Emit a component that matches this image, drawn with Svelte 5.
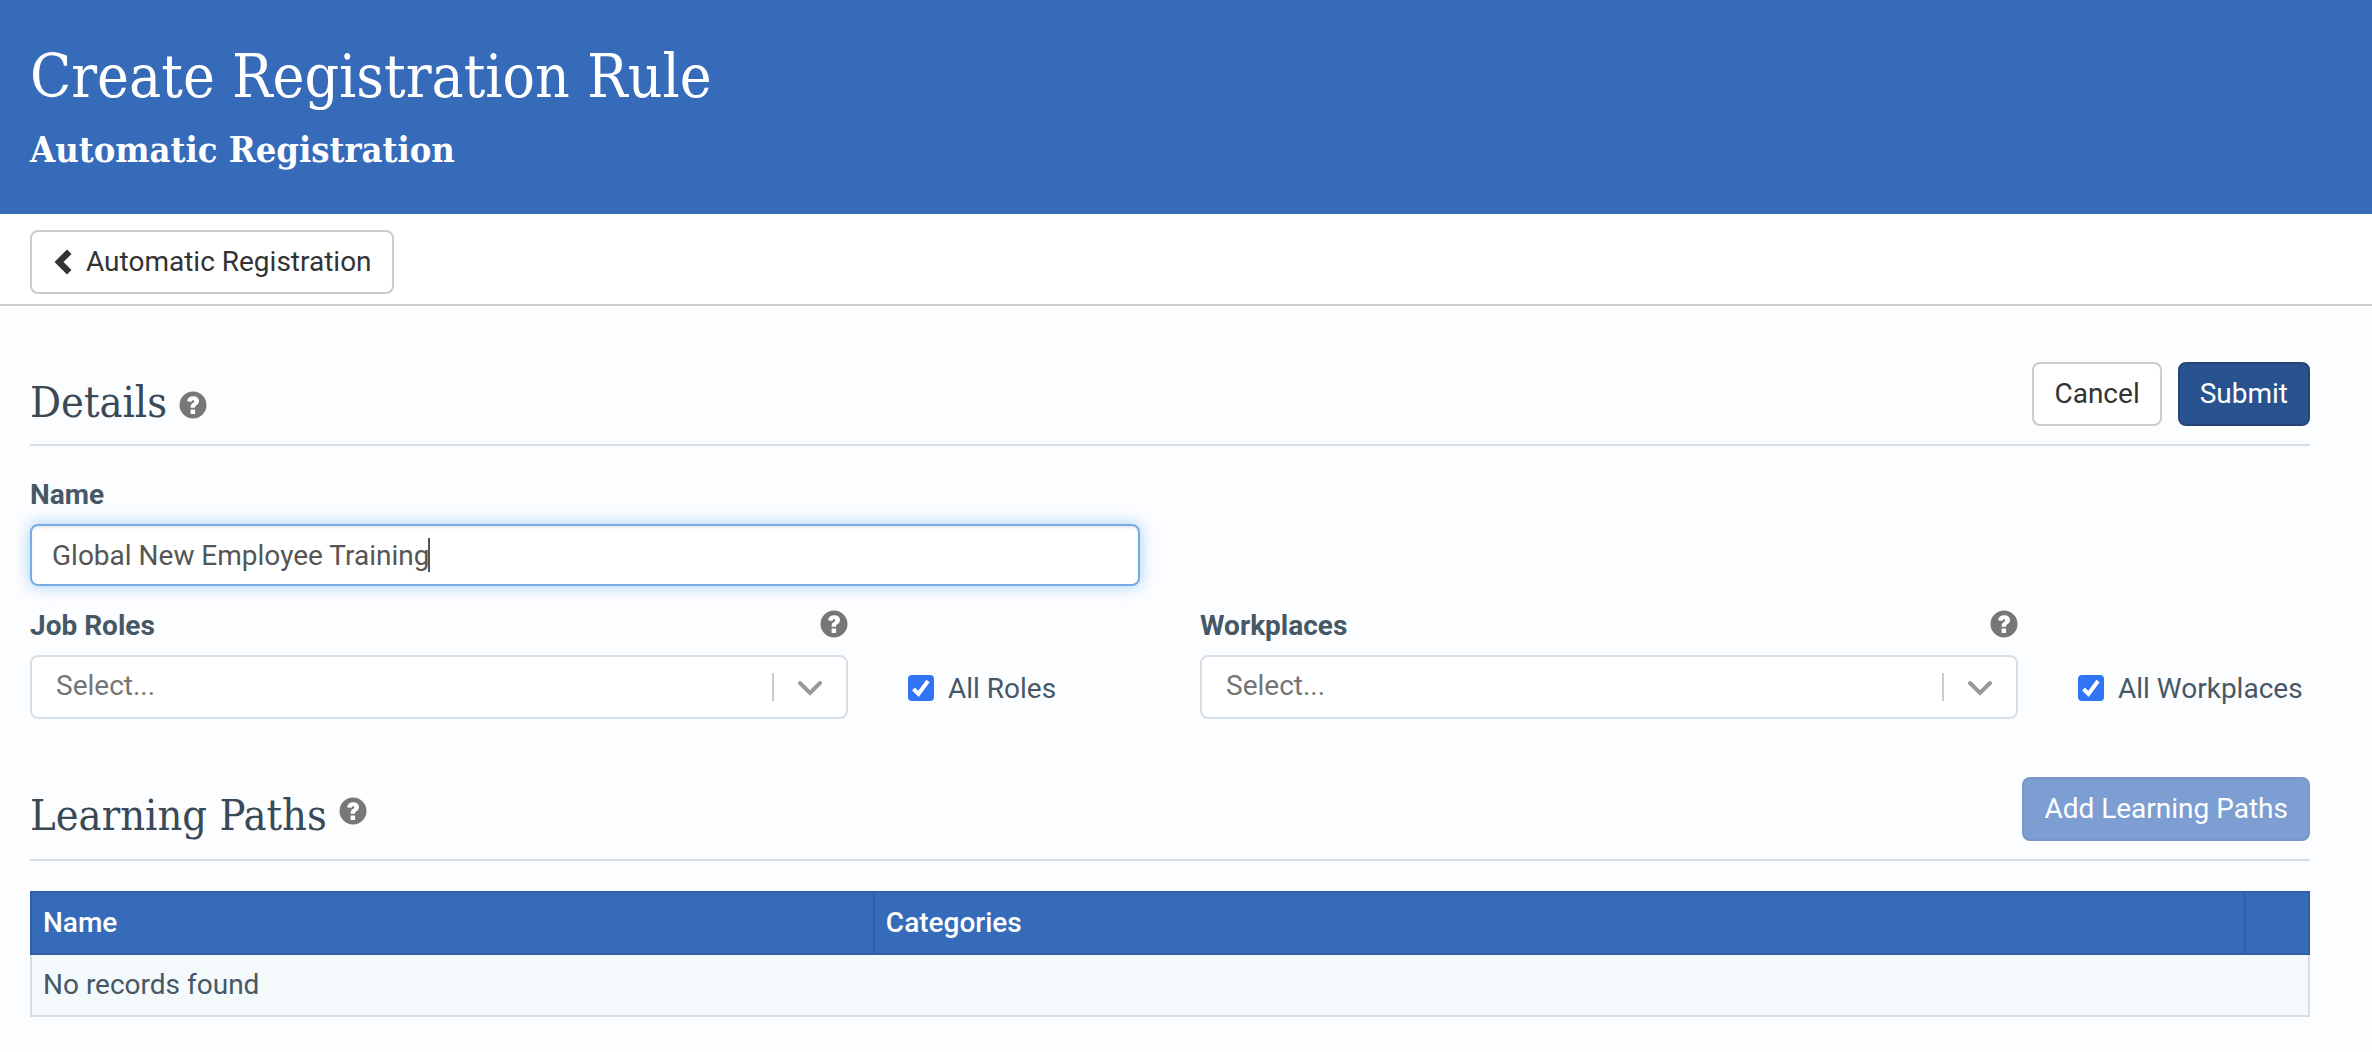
<script>
  let name = $state('Global New Employee Training')
  let allChecked = $state({ roles: true, workplaces: true })
  let records = $state([])

  const pickers = [
    { id: 'roles', label: 'Job Roles', all: 'All Roles' },
    { id: 'workplaces', label: 'Workplaces', all: 'All Workplaces' }
  ]
</script>

{#snippet help(topic)}
  <button type="button" class="help" aria-label="Help: {topic}">
    <svg viewBox="0 0 28 28" aria-hidden="true">
      <circle cx="14" cy="14" r="13.5" fill="#777" />
      <path d="M8 10.200C8.600 7 10.800 5.300 14.200 5.300c3.300 0 5.800 1.800 5.800 4.700 0 2-1 3.200-2.600 4.200-1.100.7-1.300 1.200-1.300 2.500h-4.500c0-2.500.5-3.500 2.200-4.600 1-.7 1.400-1 1.400-1.700 0-.8-.5-1.200-1.200-1.200-.9 0-1.400.6-1.600 1.700z" fill="#fff" />
      <rect x="11.600" y="18.500" width="4.500" height="4.500" fill="#fff" />
    </svg>
  </button>
{/snippet}

<header class="banner">
  <h1>Create Registration Rule</h1>
  <p>Automatic Registration</p>
</header>

<nav class="toolbar">
  <a class="btn" href="#automatic-registration">
    <svg class="back" viewBox="0 0 18 26" aria-hidden="true">
      <path d="M13 0.500 L17.500 5 L9.500 13 L17.500 21 L13 25.500 L0.500 13 Z" fill="#333" />
    </svg>
    Automatic Registration
  </a>
</nav>

<main>
  <form onsubmit={e => e.preventDefault()}>
    <div class="section-head">
      <h2>Details</h2>
      {@render help('Details')}
      <div class="actions">
        <button type="button" class="btn">Cancel</button>
        <button type="submit" class="btn primary">Submit</button>
      </div>
    </div>

    <div class="row">
      <div class="field">
        <label class="title" for="name">Name</label>
        <div class="name-box">
          <input id="name" type="text" bind:value={name} />
          <span class="caret"></span>
        </div>
      </div>
    </div>

    <div class="row">
      {#each pickers as picker}
        <div class="picker">
          <div class="field">
            <div class="label-row">
              <label class="title" for={picker.id}>{picker.label}</label>
              {@render help(picker.label)}
            </div>
            <div class="select">
              <select id={picker.id}>
                <option>Select...</option>
              </select>
              <svg viewBox="0 0 76 60" aria-hidden="true">
                <path d="M1 16V44" stroke="#ccc" stroke-width="2" />
                <path d="M28 26L38 36L48 26" fill="none" stroke="#999" stroke-width="4" stroke-linecap="round" />
              </svg>
            </div>
          </div>
          <label class="check">
            <span class="tick">
              <input type="checkbox" bind:checked={allChecked[picker.id]} />
              <svg viewBox="0 0 26 26" aria-hidden="true">
                <path d="M5.500 14L10.500 19L20 6" fill="none" stroke="#fff" stroke-width="4" />
              </svg>
            </span>
            {picker.all}
          </label>
        </div>
      {/each}
    </div>
  </form>

  <section>
    <div class="section-head paths">
      <h2>Learning Paths</h2>
      {@render help('Learning Paths')}
      <div class="actions">
        <button type="button" class="btn primary" disabled>Add Learning Paths</button>
      </div>
    </div>

    <table>
      <thead>
        <tr>
          <th class="col-name">Name</th>
          <th>Categories</th>
          <th class="col-tools"></th>
        </tr>
      </thead>
      <tbody>
        {#each records as record}
          <tr>
            <td>{record.name}</td>
            <td>{record.categories}</td>
            <td></td>
          </tr>
        {:else}
          <tr>
            <td colspan="3">No records found</td>
          </tr>
        {/each}
      </tbody>
    </table>
  </section>
</main>

<style>
  :global(body) {
    background: #fcfdff;
    color: #465866;
    font: 28px/40px Roboto, "Liberation Sans", sans-serif;
  }
  * {
    box-sizing: border-box;
  }
  h1, h2, p {
    margin: 0;
    font-family: "Roboto Slab", "DejaVu Serif Condensed", "DejaVu Serif", serif;
    font-weight: 300;
  }

  .banner {
    padding: 40px 30px 42px;
    background: #366bb9;
    color: #fff;
  }
  h1 {
    font-size: 60px;
    line-height: 72px;
  }
  .banner p {
    margin-top: 14px;
    font-size: 36px;
    font-weight: 600;
    line-height: 46px;
  }

  .toolbar {
    display: flex;
    padding: 16px 30px 10px;
    background: #fff;
    border-bottom: 2px solid #ccc;
  }

  .btn {
    display: inline-flex;
    align-items: center;
    height: 64px;
    padding: 0 20px;
    border: 2px solid #ccc;
    border-radius: 8px;
    background: #fff;
    color: #333;
    font: inherit;
    text-decoration: none;
  }
  .primary {
    background: #28538f;
    border-color: #214475;
    color: #fff;
  }
  .primary:disabled {
    background: #7c9ed2;
    border-color: #7896c6;
  }
  .back {
    width: 18px;
    height: 26px;
    margin: 0 14px 0 2px;
  }

  main {
    padding: 56px 62px 0 30px;
  }
  .section-head {
    display: flex;
    align-items: center;
    gap: 12px;
    padding-bottom: 18px;
    border-bottom: 2px solid #d6dfe6;
  }
  h2 {
    padding-top: 16px;
    color: #3a4956;
    font-size: 43px;
    line-height: 48px;
  }
  .section-head .help {
    margin-top: 22px;
  }
  .paths {
    margin-top: 58px;
  }
  .paths h2 {
    padding-top: 12px;
  }
  .paths .help {
    margin-top: 4px;
  }
  .actions {
    display: flex;
    gap: 16px;
    margin-left: auto;
  }

  .help {
    display: flex;
    padding: 0;
    border: 0;
    background: none;
  }
  .help svg {
    width: 28px;
    height: 28px;
  }

  .row {
    display: grid;
    grid-template-columns: 1fr 1fr;
    gap: 60px;
  }
  .title {
    display: block;
    padding: 29px 0 9px;
    font-weight: 700;
  }
  .name-box {
    position: relative;
  }
  input[type="text"] {
    display: block;
    width: 100%;
    height: 62px;
    padding: 0 20px;
    border: 2px solid #75abe6;
    border-radius: 8px;
    outline: 0;
    background: #fff;
    box-shadow: inset 0 2px 2px rgba(0, 0, 0, .08), 0 0 16px rgba(102, 175, 233, .6);
    color: #555;
    font: inherit;
  }
  .caret {
    position: absolute;
    top: 14px;
    left: 398px;
    width: 2px;
    height: 34px;
    background: #555;
  }

  .picker {
    display: grid;
    grid-template-columns: 818px 1fr;
    gap: 60px;
    align-items: end;
  }
  .label-row {
    display: flex;
    align-items: flex-end;
    justify-content: space-between;
  }
  .label-row .title {
    padding-top: 20px;
  }
  .label-row .help {
    margin-bottom: 17px;
  }
  .select {
    display: grid;
  }
  .select select, .select svg {
    grid-area: 1 / 1;
  }
  select {
    width: 100%;
    height: 64px;
    padding: 0 80px 2px 24px;
    border: 2px solid #d6dfe6;
    border-radius: 8px;
    appearance: none;
    background: #fff;
    color: #757575;
    font: inherit;
  }
  .select svg {
    justify-self: end;
    align-self: center;
    width: 76px;
    height: 60px;
    pointer-events: none;
  }

  .check {
    display: flex;
    align-items: center;
    gap: 14px;
    padding-bottom: 10px;
    white-space: nowrap;
  }
  .tick {
    display: grid;
    width: 26px;
    height: 28px;
  }
  .tick input, .tick svg {
    grid-area: 1 / 1;
    width: 26px;
    height: 26px;
  }
  .tick input {
    margin: 0;
    border: 2px solid #999;
    border-radius: 4px;
    appearance: none;
    background: #fff;
  }
  .tick input:checked {
    border-color: #3175f6;
    background: #3175f6;
  }
  .tick svg {
    pointer-events: none;
  }

  table {
    width: 100%;
    margin-top: 30px;
    border-collapse: collapse;
    table-layout: fixed;
  }
  th, td {
    height: 62px;
    padding: 0 11px;
    text-align: left;
  }
  th {
    border: 2px solid #305fa5;
    background: #366bb9;
    color: #fff;
    font-weight: 500;
  }
  td {
    border: 2px solid #d6dfe6;
    background: #f4f9fc;
  }
  .col-name {
    width: 37%;
  }
  .col-tools {
    width: 64px;
  }
</style>
